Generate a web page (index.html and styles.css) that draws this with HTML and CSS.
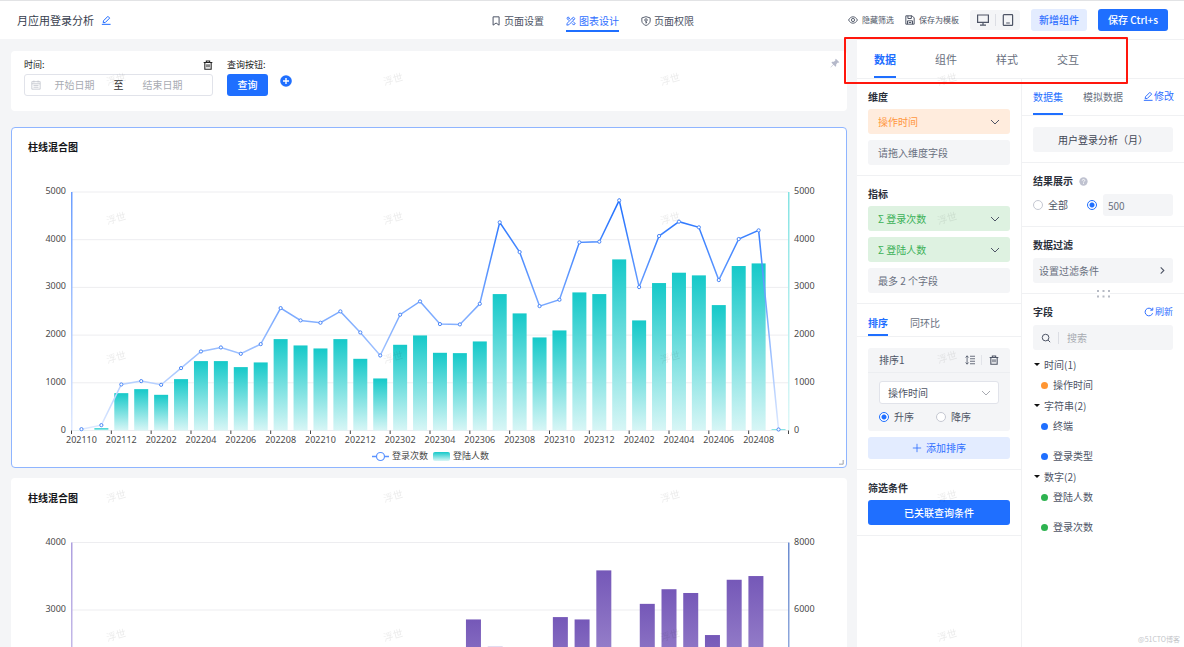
FILE: index.html
```html
<!DOCTYPE html>
<html lang="zh-CN">
<head>
<meta charset="utf-8">
<title>月应用登录分析</title>
<link rel="stylesheet" href="styles.css">
</head>
<body>
<svg class="defs" aria-hidden="true">
  <symbol id="edit" viewBox="0 0 12 12"><path d="M2.6 9.2 3 6.9 8.3 1.6 10.4 3.7 5.1 9 2.6 9.2ZM1 11.2H11.5" fill="none" stroke="currentColor" stroke-width="1.2"/></symbol>
  <symbol id="trash" viewBox="0 0 12 12"><path d="M.8 3H11.2M4 3V1.2H8V3M2.2 3V11H9.8V3M4.8 5.2V8.8M7.2 5.2V8.8" fill="none" stroke="currentColor" stroke-width="1.3"/></symbol>
  <symbol id="chevron" viewBox="0 0 10 10"><path d="M1 3 5 7 9 3" fill="none" stroke="currentColor"/></symbol>
</svg>

<header class="header">
  <div class="page-name">
    <h1>月应用登录分析</h1>
    <button class="icon-btn blue" aria-label="编辑名称"><svg class="ico"><use href="#edit"/></svg></button>
  </div>
  <nav class="nav">
    <a href="#settings"><svg class="ico" viewBox="0 0 12 12"><path d="M2.5 1H9.7V11L6.1 8.4 2.5 11Z" fill="none" stroke="currentColor" stroke-width="1.2"/></svg>页面设置</a>
    <a href="#design" class="active"><svg class="ico" viewBox="0 0 12 12"><g fill="none" stroke="currentColor" stroke-width="1.1"><path d="M1 11 1.5 8.6 8.8 1.3 10.8 3.2 3.5 10.5Z"/><path d="M4.7 3.9 2.8 1 1 2.8 3.7 5.4M7.2 8.7 9.2 10.9 11 9.1 8.4 6.5M2 4 3 3M9 10 10 9M7.4 2.8 9.2 4.7"/></g></svg>图表设计</a>
    <a href="#rights"><svg class="ico" viewBox="0 0 12 12"><g fill="none" stroke="currentColor" stroke-width="1.1"><path d="M6 .8 11 2.3V6C11 8.5 8.5 10.5 6 11.4 3.5 10.5 1 8.5 1 6V2.3Z"/><circle cx="6" cy="4.8" r="1.5"/><path d="M6 6.3V9M6 7.8H7.3"/></g></svg>页面权限</a>
  </nav>
  <div class="actions">
    <button class="text-btn"><svg class="ico" viewBox="0 0 12 12"><g fill="none" stroke="currentColor" stroke-width="1.1"><path d="M.7 6C3.2.9 8.8.9 11.3 6 8.8 11.1 3.2 11.1.7 6Z"/><circle cx="6" cy="6" r="1.9"/></g></svg>隐藏筛选</button>
    <button class="text-btn"><svg class="ico" viewBox="0 0 12 12"><path d="M1 1H8.5L11 3.5V11H1ZM3.5 1V4.2H7.6V1M3 11V7H9V11M4.5 9H7.5" fill="none" stroke="currentColor" stroke-width="1.2"/></svg>保存为模板</button>
    <div class="devices">
      <button class="icon-btn" aria-label="电脑端"><svg viewBox="0 0 14 12"><path d="M1.6 1H12.4V8.4H1.6ZM7 8.4V11M4 11.2H10" fill="none" stroke="currentColor" stroke-width="1.2"/></svg></button>
      <button class="icon-btn" aria-label="移动端"><svg viewBox="0 0 14 12"><path d="M2.3 1.3Q2.3.7 3 .7H11Q11.6.7 11.6 1.3V10.7Q11.6 11.3 11 11.3H3Q2.3 11.3 2.3 10.7ZM5.2 9H8.8" fill="none" stroke="currentColor" stroke-width="1.2"/></svg></button>
    </div>
    <button class="btn light">新增组件</button>
    <button class="btn primary">保存 Ctrl+s</button>
  </div>
</header>

<div class="workspace">
  <main class="canvas">
    <section class="card filters">
      <div class="filter range">
        <div class="filter-label"><label for="start">时间:</label><button class="icon-btn dark" aria-label="删除"><svg class="ico"><use href="#trash"/></svg></button></div>
        <div class="date-range">
          <svg class="cal" viewBox="0 0 12 12"><path d="M1 2H11V11H1ZM1 4.5H11M3.5 .7V3M8.5 .7V3M3 6.5H9M3 8.7H9" fill="none" stroke="currentColor"/></svg>
          <input id="start" type="text" placeholder="开始日期"><span>至</span><input type="text" placeholder="结束日期" aria-label="结束日期">
        </div>
      </div>
      <div class="filter">
        <div class="filter-label">查询按钮:</div>
        <button class="btn primary query">查询</button>
      </div>
      <button class="add" aria-label="添加筛选"><svg viewBox="0 0 12 12"><circle cx="6" cy="6" r="5.8" fill="currentColor"/><path d="M3 6H9M6 3V9" stroke="#fff" stroke-width="1.4"/></svg></button>
      <button class="icon-btn pin" aria-label="固定"><svg class="ico" viewBox="0 0 12 12"><path d="M7 .8 11.2 5 10 5.8 9.4 5.5 7.5 7.4 7.4 9.5 6.5 10.4 4.3 8.2 1 11.4.6 11 3.8 7.7 1.7 5.5 2.6 4.6 4.7 4.5 6.6 2.6 6.2 2Z" fill="currentColor"/></svg></button>
    </section>

    <section class="card chart-card selected">
      <h2>柱线混合图</h2>
      <svg class="chart" id="chart-main" viewBox="0 0 834 312" role="img" aria-label="登录次数与登陆人数"></svg>
      <svg class="resize" viewBox="0 0 6 6"><path d="M5 0V5H0" fill="none" stroke="#8a8f99"/></svg>
    </section>

    <section class="card chart-card">
      <h2>柱线混合图</h2>
      <svg class="chart" id="chart-second" viewBox="0 0 834 370" role="img" aria-label="登陆人数"></svg>
    </section>
  </main>

  <aside class="panel">
    <nav class="panel-tabs">
      <a href="#data" class="active">数据</a><a href="#widget">组件</a><a href="#style">样式</a><a href="#action">交互</a>
      <span class="callout"></span>
    </nav>
    <div class="columns">
      <div class="col config">
        <section>
          <h3>维度</h3>
          <div class="stack">
            <div class="field orange"><select aria-label="维度"><option>操作时间</option></select><svg class="arrow"><use href="#chevron"/></svg></div>
            <div class="drop">请拖入维度字段</div>
          </div>
        </section>
        <section>
          <h3>指标</h3>
          <div class="stack">
            <div class="field green"><select aria-label="指标一"><option>Σ 登录次数</option></select><svg class="arrow"><use href="#chevron"/></svg></div>
            <div class="field green"><select aria-label="指标二"><option>Σ 登陆人数</option></select><svg class="arrow"><use href="#chevron"/></svg></div>
            <div class="drop">最多 2 个字段</div>
          </div>
        </section>
        <nav class="sub-tabs sort-tabs"><a href="#sort" class="active">排序</a><a href="#ratio">同环比</a></nav>
        <section>
          <div class="sort-card">
            <div class="sort-head"><span>排序1</span>
              <button class="icon-btn" aria-label="调整顺序"><svg class="ico" viewBox="0 0 12 12"><path d="M2.5 1V11M.7 3 2.5 1 4.3 3M.7 9 2.5 11 4.3 9M6 1.5H12M6 4.5H12M6 7.5H12M6 10.5H12" fill="none" stroke="currentColor"/></svg></button>
              <button class="icon-btn" aria-label="删除排序"><svg class="ico"><use href="#trash"/></svg></button>
            </div>
            <div class="sort-body">
              <div class="field white"><select aria-label="排序字段"><option>操作时间</option></select><svg class="arrow"><use href="#chevron"/></svg></div>
              <div class="radios"><label><input type="radio" name="order" checked>升序</label><label><input type="radio" name="order">降序</label></div>
            </div>
          </div>
          <button class="btn light wide"><svg class="ico" viewBox="0 0 12 12"><path d="M1 6H11M6 1V11" stroke="currentColor"/></svg>添加排序</button>
        </section>
        <section>
          <h3>筛选条件</h3>
          <button class="btn primary wide tall">已关联查询条件</button>
        </section>
      </div>

      <div class="col dataset">
        <nav class="sub-tabs data-tabs"><a href="#dataset" class="active">数据集</a><a href="#mock">模拟数据</a><a href="#edit-set" class="link"><svg class="ico"><use href="#edit"/></svg>修改</a></nav>
        <section><button class="drop center">用户登录分析（月）</button></section>
        <section>
          <h3>结果展示 <svg class="help" viewBox="0 0 10 10"><circle cx="5" cy="5" r="4.6" fill="#bfc2d0"/><path d="M3.6 4Q3.7 2.7 5 2.7T6.4 4Q6.3 4.7 5 5.4V6M5 6.7V7.6" fill="none" stroke="#fff"/></svg></h3>
          <div class="result"><label><input type="radio" name="limit">全部</label><input type="radio" name="limit" checked aria-label="限制条数"><input class="limit" type="text" value="500" aria-label="条数"></div>
        </section>
        <section class="filter-set">
          <h3>数据过滤</h3>
          <button class="drop between">设置过滤条件<svg viewBox="0 0 10 10"><path d="M3 1.500 6.500 5 3 8.500" fill="none" stroke="currentColor" stroke-width="1.2"/></svg></button>
          <svg class="grip" viewBox="0 0 13 8"><path d="M0 1H2M5.5 1H7.500M11 1H13M0 6.500H2M5.500 6.500H7.500M11 6.500H13" stroke="#b6bac4" stroke-width="2"/></svg>
        </section>
        <section class="fields">
          <h3><span>字段</span><button class="text-btn refresh"><svg class="ico" viewBox="0 0 12 12"><path d="M10.300 7.500A4.600 4.600 0 1 1 9.600 3.200M10.500 .8V3.800H7.500" fill="none" stroke="currentColor" stroke-width="1.200"/></svg>刷新</button></h3>
          <div class="search"><svg class="ico" viewBox="0 0 12 12"><path d="M8.500 8.500 11 11" stroke="currentColor" stroke-width="1.200"/><circle cx="5.500" cy="5.500" r="4" fill="none" stroke="currentColor" stroke-width="1.200"/></svg><input type="text" placeholder="搜索" aria-label="搜索字段"></div>
          <details open><summary>时间(1)</summary><ul class="time"><li>操作时间</li></ul></details>
          <details open><summary>字符串(2)</summary><ul class="string"><li>终端</li><li>登录类型</li></ul></details>
          <details open><summary>数字(2)</summary><ul class="number"><li>登陆人数</li><li>登录次数</li></ul></details>
        </section>
      </div>
    </div>
  </aside>
</div>

<svg class="watermark" aria-hidden="true">
  <pattern id="wm" x="-22" y="10" width="277" height="139" patternUnits="userSpaceOnUse"><text x="138" y="73" text-anchor="middle" transform="rotate(-15 138 69)">浮世</text></pattern>
  <rect width="100%" height="100%" fill="url(#wm)"/>
</svg>
<span class="credit">@51CTO博客</span>
<script src="chart.js"></script>
</body>
</html>
```
FILE: styles.css
```css
* { box-sizing: border-box; }
body {
  margin: 0;
  height: 100vh;
  overflow: hidden;
  display: flex;
  flex-direction: column;
  font: 10px/14px "Noto Sans CJK SC", sans-serif;
  color: #4e5566;
  background: #f4f5f7;
}
h1, h2, h3, ul { margin: 0; padding: 0; }
button, input, select { font: inherit; color: inherit; margin: 0; padding: 0; border: 0; background: none; outline: 0; }
button { display: flex; align-items: center; justify-content: center; }
a { color: inherit; text-decoration: none; white-space: nowrap; }
.defs { position: absolute; width: 0; height: 0; }
.ico { width: 10px; height: 10px; flex: none; }

.header {
  flex: none;
  height: 39px;
  display: grid;
  grid-template-columns: 1fr auto 1fr;
  align-items: center;
  padding: 0 16px 0 17px;
  border-top: 1px solid #e2e3e5;
  background: #fff;
}
.page-name { display: flex; align-items: center; gap: 7px; }
.page-name h1 { font-size: 11px; font-weight: 400; line-height: 16px; color: #363d4d; }
.blue { color: #1f6bff; }
.dark { color: #222; }
.nav { display: flex; gap: 22px; align-self: end; }
.nav a { display: flex; align-items: center; gap: 3px; height: 21px; margin-bottom: 7px; border-bottom: 2px solid transparent; }
.nav .active { color: #2f6fff; border-color: #1f6fff; }
.actions { display: flex; align-items: center; justify-content: flex-end; gap: 11px; }
.text-btn { gap: 4px; font-size: 8px; white-space: nowrap; }
.devices { display: flex; padding: 4px 0; border-radius: 3px; background: #f4f5f7; }
.devices button { width: 25px; height: 12px; }
.devices button + button { border-left: 1px solid #dcdee4; }
.devices svg { width: 14px; height: 12px; }
.btn { height: 22px; padding: 0 8px; border-radius: 3px; font-weight: 500; white-space: nowrap; }
.btn.primary { padding: 0 10px; color: #fff; background: #1f6fff; }
.btn.light { color: #2f6fff; background: #e3ecff; }
.btn.wide { width: 100%; gap: 4px; font-weight: 400; }
.btn.tall { height: 25px; font-weight: 500; }

.workspace { flex: 1; min-height: 0; display: flex; }
.canvas { flex: 1; min-width: 0; padding: 12px 10px 0 11px; overflow-y: auto; scrollbar-width: none; }
.card { border-radius: 4px; background: #fff; }
.filters { display: flex; align-items: flex-start; gap: 14px; height: 60px; padding: 7px 7px 0 13px; margin-bottom: 16px; }
.range { width: 189px; }
.filter-label { display: flex; justify-content: space-between; align-items: center; height: 14px; margin-bottom: 2px; font-size: 9px; color: #222; }
.date-range { display: flex; align-items: center; height: 22px; padding-left: 6px; border: 1px solid #e1e3ea; border-radius: 3px; }
.date-range input { width: 67px; text-align: center; }
.date-range span { width: 21px; text-align: center; color: #333; }
.cal { width: 10px; height: 10px; color: #c0c4cc; }
::placeholder { color: #a8abb2; opacity: 1; }
.query { width: 41px; }
.add { color: #1f6fff; margin: 17px 0 0 -2px; }
.add svg { width: 12px; height: 12px; }
.pin { margin-left: auto; color: #b5b9ca; }

.chart-card { position: relative; border: 1px solid transparent; margin-bottom: 10px; }
.chart-card.selected { border-color: #8fb5ff; }
.chart-card h2 { padding: 11px 0 0 16px; font-size: 10px; line-height: 16px; font-weight: 700; color: #14161a; }
.chart { display: block; width: 100%; height: auto; font: 9px "Noto Sans", "Noto Sans CJK SC", sans-serif; fill: #4a4a4a; }
.chart .legend { font: 9px "Noto Sans CJK SC", sans-serif; }
.resize { position: absolute; right: 2px; bottom: 2px; width: 5px; height: 5px; }

.panel { flex: none; width: 327px; display: flex; flex-direction: column; background: #fff; }
.panel-tabs { position: relative; display: flex; gap: 39px; height: 40px; padding-left: 17px; border-top: 1px solid #f0f1f3; border-bottom: 1px solid #f0f1f3; font-size: 11px; color: #697080; }
.panel-tabs a { line-height: 39px; height: 38px; border-bottom: 2px solid transparent; }
.panel-tabs .active { font-weight: 700; color: #1f6fff; border-color: #1f6fff; }
.callout { position: absolute; left: -13px; top: -3px; width: 284px; height: 47px; border: 2px solid #ff170d; border-radius: 1px; z-index: 2; }
.columns { flex: 1; display: flex; }
.col { flex: 1; }
.dataset { flex: none; width: 163px; border-left: 1px solid #f0f1f3; }
.col section { padding: 11px 11px 10px; border-bottom: 1px solid #f0f1f3; }
.col h3 { display: flex; align-items: center; gap: 6px; margin-bottom: 6px; font-size: 10px; font-weight: 700; color: #2b303b; }
.config h3 { margin-bottom: 5px; }
.stack { display: grid; gap: 6px; }
.field { position: relative; height: 25px; border-radius: 3px; }
.field select { width: 100%; height: 100%; padding: 0 10px; appearance: none; }
.arrow { position: absolute; right: 10px; top: 50%; width: 10px; height: 10px; margin-top: -5px; color: #4e5566; pointer-events: none; }
.orange { background: #ffecdd; color: #ff9640; }
.green { background: #def2e1; color: #3bb158; }
.drop { display: flex; align-items: center; width: 100%; height: 25px; padding: 0 10px; border-radius: 3px; background: #f4f5f7; color: #697080; }
.drop.center { color: #3f4554; }
.drop.between { justify-content: space-between; padding: 0 6px; }
.between svg { width: 9px; height: 9px; color: #4e5566; }
.sub-tabs { display: flex; padding: 0 11px; border-bottom: 1px solid #f0f1f3; color: #697080; }
.sub-tabs a { border-bottom: 2px solid transparent; }
.sub-tabs .active { color: #1f6fff; border-color: #1f6fff; }
.sort-tabs { gap: 22px; height: 33px; line-height: 38px; }
.sort-tabs a { height: 32px; }
.sort-tabs .active { font-weight: 700; }
.data-tabs { height: 37px; gap: 20px; line-height: 36px; }
.data-tabs a { height: 36px; }
.data-tabs .link { display: flex; align-items: center; gap: 1px; margin-left: auto; color: #2f6fff; }
.sort-card { margin-bottom: 6px; border-radius: 3px; background: #f4f5f7; }
.sort-head { display: flex; align-items: center; height: 25px; padding: 0 11px; border-bottom: 1px solid #eceef1; }
.sort-head span { margin-right: auto; }
.sort-head button + button { margin-left: 6px; padding-left: 7px; border-left: 1px solid #e2e4e9; }
.sort-body { padding: 8px 11px 7px; }
.white { height: 23px; border: 1px solid #e1e3ea; background: #fff; }
.white select { padding: 0 8px; }
.white .arrow { right: 7px; color: #a8abb2; }
.radios { display: flex; gap: 22px; margin-top: 6px; }
label { display: flex; align-items: center; gap: 5px; }
input[type="radio"] { appearance: none; width: 10px; height: 10px; border: 1px solid #c5c8d2; border-radius: 50%; background: #fff; }
input[type="radio"]:checked { border-color: #1f6fff; background: radial-gradient(circle, #1f6fff 0 2px, #fff 3px); }
.help { width: 9px; height: 9px; }
.result { display: flex; align-items: center; }
.result > input[type="radio"] { margin: 0 6px 0 auto; }
.limit { width: 70px; height: 22px; padding: 0 5px; border-radius: 3px; background: #f4f5f7; color: #697080; }
.filter-set { position: relative; }
.grip { position: absolute; left: 75px; bottom: -5px; width: 13px; height: 8px; background: #fff; }
.col .fields { border-bottom: 0; }
.fields h3 { justify-content: space-between; }
.refresh { gap: 1px; font-size: 9px; font-weight: 400; color: #2f6fff; }
.search { display: flex; align-items: center; height: 25px; margin-bottom: 4px; padding: 0 8px; border-radius: 3px; background: #f4f5f7; }
.search input { flex: 1; min-width: 0; margin-left: 7px; padding-left: 8px; border-left: 1px solid #dcdee4; line-height: 12px; height: 12px; }
summary { display: flex; align-items: center; gap: 4px; height: 21px; padding-left: 1px; list-style: none; }
summary::before { content: ""; border: 3px solid transparent; border-top: 3px solid #111; border-bottom: 0; }
details ul { display: grid; gap: 10px; list-style: none; }
details li { display: flex; align-items: center; gap: 5px; height: 20px; padding-left: 8px; }
details li::before { content: ""; width: 7px; height: 7px; border-radius: 50%; background: #1f6fff; }
.time li::before { background: #ff9633; }
.number li::before { background: #2eb350; }

.watermark { position: absolute; inset: 0; width: 100%; height: 100%; pointer-events: none; font-size: 10px; fill: rgba(0, 0, 0, .08); }
.credit { position: absolute; right: 4px; bottom: 2px; font: 7px/12px "Noto Sans CJK SC", sans-serif; color: #c4c6ca; }
```
FILE: chart.js
```js
const users = [10, 49, 783, 867, 748, 1077, 1455, 1455, 1329, 1427, 1916, 1783, 1720, 1916, 1503, 1091, 1797, 1993,
  1629, 1622, 1867, 2860, 2455, 1951, 2098, 2895, 2860, 3587, 2308, 3091, 3308, 3252, 2629, 3448, 3503, 21];
const logins = [28, 112, 965, 1035, 958, 1308, 1657, 1741, 1608, 1811, 2566, 2308, 2259, 2497, 2056, 1573, 2427, 2706,
  2231, 2224, 2657, 4364, 3741, 2608, 2741, 3944, 3958, 4825, 3007, 4077, 4378, 4259, 3154, 4014, 4196, 21];
const months = users.map((_, i) => String(2021 + Math.floor((9 + i) / 12)) + String((9 + i) % 12 + 1).padStart(2, "0"));

function gradient(id, from, to) {
  return `<linearGradient id="${id}" x2="0" y2="1"><stop stop-color="${from}"/><stop offset="1" stop-color="${to}"/></linearGradient>`;
}

function draw(id, o) {
  const left = 59.5, right = 776.5, top = o.top, bottom = o.bottom;
  const step = (right - left) / o.bars.length;
  const y = v => bottom - v / o.max * (bottom - top);
  const x = i => left + step * (i + 0.5);
  let s = "<defs>" + gradient(id + "b", o.bar[0], o.bar[1]) + gradient(id + "l", "#1f6fff", "#dce8ff")
    + gradient(id + "a", o.axisL[0], o.axisL[1]) + gradient(id + "r", o.axisR[0], o.axisR[1]) + "</defs>";
  for (let v = 0; v <= o.max; v += 1000) {
    s += `<path d="M${left} ${y(v)}H${right}" stroke="#ededf0"/>`;
    s += `<text x="54" y="${y(v) + 2}" text-anchor="end">${v}</text><text x="782" y="${y(v) + 2}">${v * o.scale}</text>`;
  }
  s += `<rect x="${left - 0.5}" y="${top}" width="1.5" height="${bottom - top}" fill="url(#${id}a)"/>`;
  s += `<rect x="${right - 0.5}" y="${top}" width="1.5" height="${bottom - top}" fill="url(#${id}r)"/>`;
  o.bars.forEach((v, i) => {
    s += `<rect x="${x(i) - o.barWidth / 2}" y="${y(v)}" width="${o.barWidth}" height="${bottom - y(v)}" fill="url(#${id}b)"/>`;
  });
  if (o.line) {
    s += `<polyline points="${o.line.map((v, i) => x(i) + "," + y(v)).join(" ")}" fill="none" stroke="url(#${id}l)" stroke-width="1.5"/>`;
    o.line.forEach((v, i) => {
      s += `<circle cx="${x(i)}" cy="${y(v)}" r="1.6" fill="#fff" stroke="#4a86f7"/>`;
    });
    months.forEach((m, i) => {
      if (i % 2) return;
      s += `<path d="M${left + step * i} ${bottom}v3.5" stroke="#444"/><text x="${x(i)}" y="${bottom + 12}" text-anchor="middle">${m}</text>`;
    });
    s += `<path d="M${right} ${bottom}v3.5" stroke="#444"/>`;
    s += `<g class="legend"><path d="M360 301.5H377" stroke="#5b93ff" stroke-width="1.5"/><circle cx="368.5" cy="301.5" r="4" fill="#fff" stroke="#5b93ff" stroke-width="1.2"/>`
      + `<text x="380" y="304">登录次数</text><rect x="421" y="297" width="17" height="9" rx="2" fill="url(#${id}b)"/><text x="441" y="304">登陆人数</text></g>`;
  }
  document.getElementById(id).innerHTML = s;
}

draw("chart-main", { top: 37, bottom: 275.5, max: 5000, scale: 1, bars: users, line: logins, barWidth: 14,
  bar: ["#15c9c9", "#d8f6f6"], axisL: ["#6a9dff", "#dfe9ff"], axisR: ["#83e3e3", "#dff8f8"] });
draw("chart-second", { top: 36.5, bottom: 306.5, max: 4000, scale: 2, bars: users.slice(3), barWidth: 15,
  bar: ["#7558b8", "#d6cbeb"], axisL: ["#ad9fdf", "#e6e0f5"], axisR: ["#6a8bd0", "#c9d5ee"] });
```
